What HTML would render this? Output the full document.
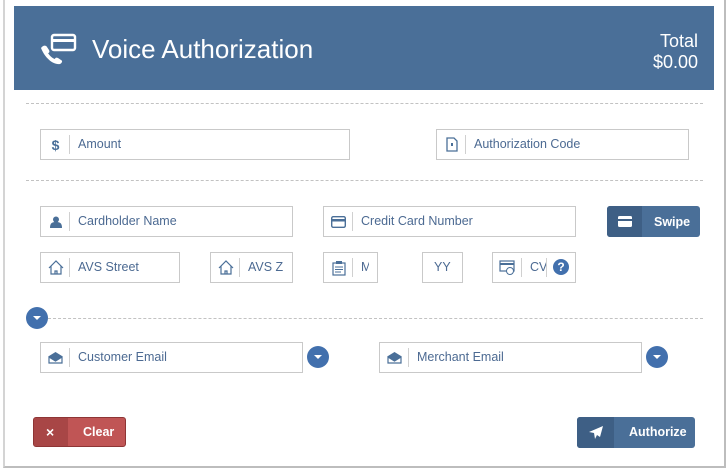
<!DOCTYPE html>
<html><head><style>
*{box-sizing:border-box;margin:0;padding:0}
body{width:728px;height:469px;background:#fff;font-family:"Liberation Sans",sans-serif;position:relative;overflow:hidden}
.frame{position:absolute;left:3px;top:0;width:723px;height:468px;border-left:2px solid #d4d4d4;border-right:2px solid #bdbdbd;border-bottom:2px solid #bdbdbd}
.hdr{position:absolute;left:14px;top:6px;width:700px;height:84px;background:#4a6f98}
.title{position:absolute;left:78px;top:28px;color:#fff;font-size:26px}
.tot{position:absolute;right:16px;top:25px;color:#fff;font-size:18px;text-align:right;line-height:21px}
.dl{position:absolute;height:0;border-top:1px dashed #c2c2c2}
.in{position:absolute;height:31px;border:1px solid #c9c9c9;background:#fff}
.in .ic{position:absolute;left:0;top:0;width:29px;height:29px;display:flex;align-items:center;justify-content:center;color:#4a6f98}
.in .sep{position:absolute;left:28px;top:5px;width:1px;height:19px;background:#d0d0d0}
.in .t{position:absolute;left:37px;top:7px;font-size:12.5px;color:#4c6a92;white-space:nowrap;overflow:hidden}
.circ{position:absolute;width:22px;height:22px;border-radius:50%;background:#4270ad}
.circ:after{content:"";position:absolute;left:7px;top:9px;border-left:4px solid transparent;border-right:4px solid transparent;border-top:4px solid #fff}
.btn{position:absolute;border-radius:3px;color:#fff;font-size:13px;overflow:hidden}
</style></head><body>
<div class="frame"></div>
<div class="hdr">
<svg style="position:absolute;left:25px;top:27px" width="40" height="32" viewBox="0 0 40 32"><rect x="13" y="2" width="23" height="15" rx="2" fill="none" stroke="#fff" stroke-width="2.4"/><rect x="13" y="6" width="23" height="3" fill="#fff"/><path d="M2 15c2-3 5-3 6-1l2 3c1 2 0 3-1 3 2 3 4 5 7 6 0-1 1-2 3-1l3 2c2 1 1 3-1 4-7 1-15-6-19-16z" fill="#fff"/></svg>
<div class="title">Voice Authorization</div>
<div class="tot">Total<br>$0.00</div>
</div>
<div class="dl" style="left:26px;top:103px;width:677px"></div>
<div class="dl" style="left:26px;top:180px;width:677px"></div>
<div class="dl" style="left:48px;top:318px;width:655px"></div>
<div class="circ" style="left:26px;top:307px"></div>

<div class="in" style="left:40px;top:129px;width:310px"><div class="ic" style="font-size:14px;font-weight:bold">$</div><div class="sep"></div><div class="t">Amount</div></div>
<div class="in" style="left:436px;top:129px;width:253px"><div class="ic"><svg width="12" height="15"><path d="M1 1h7l3 3v10H1z" fill="none" stroke="#4a6f98" stroke-width="1.3"/><rect x="5" y="6" width="2" height="3" fill="#4a6f98"/></svg></div><div class="sep"></div><div class="t">Authorization Code</div></div>

<div class="in" style="left:40px;top:206px;width:253px"><div class="ic"><svg width="12" height="12"><circle cx="6" cy="3.5" r="3" fill="#4a6f98"/><path d="M0 12c0-5 2-6 6-6s6 1 6 6z" fill="#4a6f98"/></svg></div><div class="sep"></div><div class="t">Cardholder Name</div></div>
<div class="in" style="left:323px;top:206px;width:253px"><div class="ic"><svg width="15" height="12"><rect x=".7" y=".7" width="13.6" height="10.6" rx="1.5" fill="none" stroke="#4a6f98" stroke-width="1.4"/><rect x="1" y="3" width="13" height="2.5" fill="#4a6f98"/></svg></div><div class="sep"></div><div class="t">Credit Card Number</div></div>
<div class="btn" style="left:607px;top:206px;width:93px;height:31px;background:#4a6f98"><div style="position:absolute;left:0;top:0;width:35px;height:31px;background:#3e5f85"></div><svg style="position:absolute;left:11px;top:10px" width="14" height="11"><rect width="14" height="11" rx="1.5" fill="#fff"/><rect y="3" width="14" height="2" fill="#3e5f85"/></svg><span style="position:absolute;left:47px;top:9px;font-weight:bold;font-size:12.5px">Swipe</span></div>

<div class="in" style="left:40px;top:252px;width:140px"><div class="ic"><svg width="16" height="15"><path d="M1 8L8 1l7 7M3 6v8h10V6M7 14v-3h2v3" fill="none" stroke="#4a6f98" stroke-width="1.2"/></svg></div><div class="sep"></div><div class="t">AVS Street</div></div>
<div class="in" style="left:210px;top:252px;width:83px"><div class="ic"><svg width="16" height="15"><path d="M1 8L8 1l7 7M3 6v8h10V6M7 14v-3h2v3" fill="none" stroke="#4a6f98" stroke-width="1.2"/></svg></div><div class="sep"></div><div class="t" style="width:40px">AVS Z</div></div>
<div class="in" style="left:323px;top:252px;width:55px"><div class="ic"><svg width="14" height="16"><rect x="1" y="3" width="12" height="12" fill="none" stroke="#4a6f98" stroke-width="1.2"/><rect x="4" y="1" width="6" height="3" fill="#4a6f98"/><path d="M3 7h8M3 9.5h8M3 12h6" stroke="#4a6f98"/></svg></div><div class="sep"></div><div class="t" style="width:8px">MM</div></div>
<div class="in" style="left:422px;top:252px;width:41px"><div class="t" style="left:11px">YY</div></div>
<div class="in" style="left:492px;top:252px;width:84px"><div class="ic"><svg width="17" height="15"><rect x="1" y="1" width="14" height="10" fill="none" stroke="#4a6f98" stroke-width="1.2"/><rect x="1" y="3" width="14" height="2" fill="#4a6f98"/><circle cx="11" cy="11" r="3.5" fill="#fff" stroke="#4a6f98"/></svg></div><div class="sep"></div><div class="t" style="width:16px">CVV</div><div style="position:absolute;left:53px;top:5px;width:1px;height:19px;background:#d0d0d0"></div><div style="position:absolute;left:60px;top:6px;width:16px;height:16px;border-radius:50%;background:#4270ad;color:#fff;font-size:12px;font-weight:bold;text-align:center;line-height:16px">?</div></div>

<div class="in" style="left:40px;top:342px;width:263px"><div class="ic"><svg width="15" height="13"><path d="M1 5L7.5 1 14 5v7H1z" fill="#4a6f98"/><path d="M1 6l6.5 4L14 6v6H1z" fill="#fff" stroke="#4a6f98" stroke-width="1.2"/></svg></div><div class="sep"></div><div class="t">Customer Email</div></div>
<div class="circ" style="left:307px;top:346px"></div>
<div class="in" style="left:379px;top:342px;width:263px"><div class="ic"><svg width="15" height="13"><path d="M1 5L7.5 1 14 5v7H1z" fill="#4a6f98"/><path d="M1 6l6.5 4L14 6v6H1z" fill="#fff" stroke="#4a6f98" stroke-width="1.2"/></svg></div><div class="sep"></div><div class="t">Merchant Email</div></div>
<div class="circ" style="left:646px;top:346px"></div>

<div class="btn" style="left:33px;top:417px;width:93px;height:30px;background:#c05555;border:1px solid #8e3535"><div style="position:absolute;left:0;top:0;width:34px;height:30px;background:#a84646"></div><span style="position:absolute;left:12px;top:6px;font-weight:bold;font-size:14px">×</span><span style="position:absolute;left:49px;top:7px;font-weight:bold;font-size:12.5px">Clear</span></div>
<div class="btn" style="left:577px;top:417px;width:118px;height:31px;background:#4a6f98"><div style="position:absolute;left:0;top:0;width:37px;height:31px;background:#3e5f85"></div><svg style="position:absolute;left:12px;top:9px" width="14" height="13"><path d="M14 0L0 6l5 1 1 6 2-4 3 2z" fill="#fff"/></svg><span style="position:absolute;left:52px;top:8px;font-weight:bold;font-size:12.5px">Authorize</span></div>
</body></html>
